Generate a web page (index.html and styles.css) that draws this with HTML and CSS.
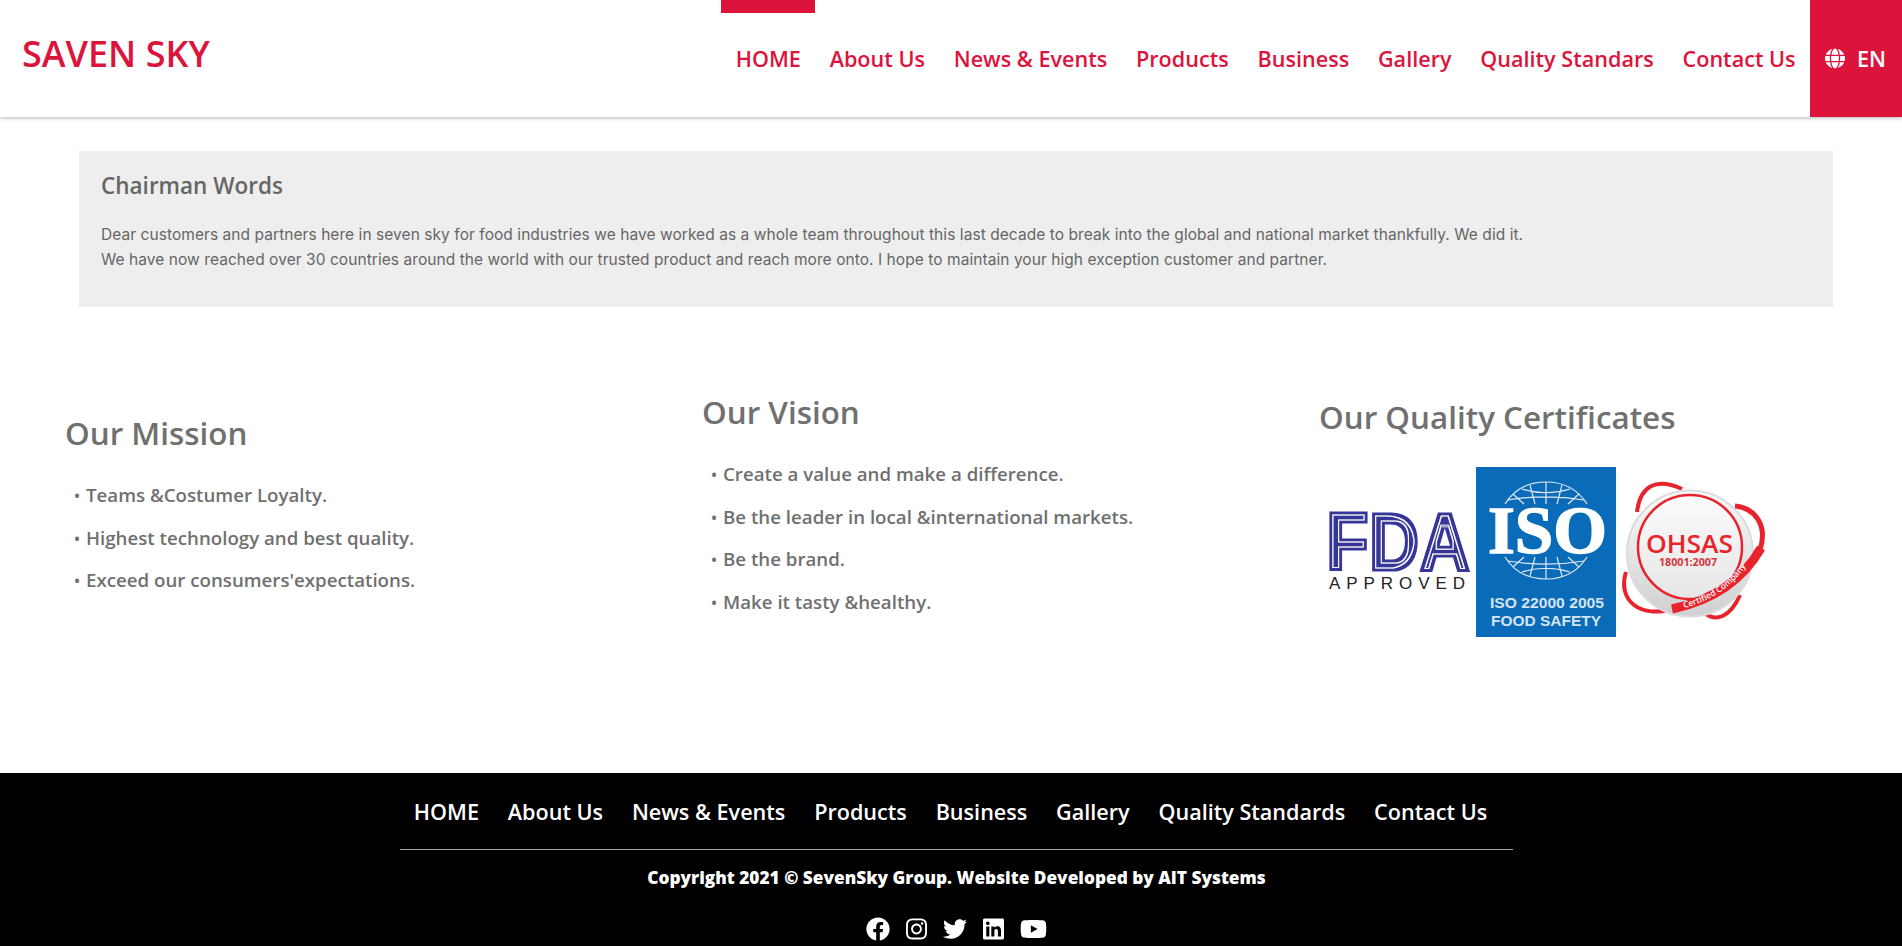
FILE: index.html
```html
<!DOCTYPE html>
<html lang="en">
<head>
    <meta charset="UTF-8">
    <meta name="viewport" content="width=device-width, initial-scale=1.0">
    <title>Chairman Words - Seven Sky</title>
    <link rel="stylesheet" href="styles.css">
</head>
<body>

    <header class="topbar">
        <a class="logo" href="#">SAVEN SKY</a>
        <nav class="main-nav">
            <a class="active" href="#">HOME</a>
            <a href="#">About Us</a>
            <a href="#">News &amp; Events</a>
            <a href="#">Products</a>
            <a href="#">Business</a>
            <a href="#">Gallery</a>
            <a href="#">Quality Standars</a>
            <a href="#">Contact Us</a>
        </nav>
        <a class="lang" href="#">
            <svg class="lang-icon" viewBox="0 0 496 512"><path fill="currentColor" d="M336.5 160C322 70.7 287.8 8 248 8s-74 62.7-88.5 152h177zM152 256c0 22.2 1.2 43.5 3.3 64h185.3c2.1-20.5 3.3-41.8 3.3-64s-1.2-43.5-3.3-64H155.3c-2.1 20.5-3.3 41.8-3.3 64zm324.7-96c-28.6-67.9-86.5-120.4-158-141.6 24.4 33.8 41.2 84.7 50 141.6h108zM177.2 18.4C105.8 39.6 47.8 92.1 19.3 160h108c8.7-56.9 25.5-107.8 49.9-141.6zM487.4 192H372.7c2.1 21 3.3 42.5 3.3 64s-1.2 43-3.3 64h114.6c5.5-20.5 8.6-41.8 8.6-64s-3.1-43.5-8.5-64zM120 256c0-21.5 1.2-43 3.3-64H8.6C3.2 212.5 0 233.8 0 256s3.2 43.5 8.6 64h114.6c-2-21-3.2-42.5-3.2-64zm39.5 96c14.5 89.3 48.7 152 88.5 152s74-62.7 88.5-152h-177zm159.3 141.6c71.4-21.2 129.4-73.7 158-141.6h-108c-8.8 56.9-25.6 107.8-50 141.6zM19.3 352c28.6 67.9 86.5 120.4 158 141.6-24.4-33.8-41.2-84.7-50-141.6h-108z"/></svg>
            EN
        </a>
    </header>

    <section class="chairman">
        <h3>Chairman Words</h3>
        <p>Dear customers and partners here in seven sky for food industries we have worked as a whole team throughout this last decade to break into the global and national market thankfully. We did it.</p>
        <p>We have now reached over 30 countries around the world with our trusted product and reach more onto. I hope to maintain your high exception customer and partner.</p>
    </section>

    <section class="columns">
        <div class="col">
            <h2>Our Mission</h2>
            <ul>
                <li>Teams &amp;Costumer Loyalty.</li>
                <li>Highest technology and best quality.</li>
                <li>Exceed our consumers'expectations.</li>
            </ul>
        </div>
        <div class="col">
            <h2>Our Vision</h2>
            <ul>
                <li>Create a value and make a difference.</li>
                <li>Be the leader in local &amp;international markets.</li>
                <li>Be the brand.</li>
                <li>Make it tasty &amp;healthy.</li>
            </ul>
        </div>
        <div class="col col-certs">
            <h2>Our Quality Certificates</h2>
            <!-- drawn in crop coordinates, 480x200 -->
            <svg class="certs" viewBox="0 0 480 200">
                <defs>
                    <!-- white inline inside the FDA letters -->
                    <filter id="inline" x="0" y="0" width="100%" height="100%">
                        <feMorphology in="SourceAlpha" operator="erode" radius="3" result="outer"/>
                        <feMorphology in="SourceAlpha" operator="erode" radius="3.5" result="inner"/>
                        <feComposite in="outer" in2="inner" operator="out" result="ring"/>
                        <feFlood flood-color="#fff"/>
                        <feComposite in2="ring" operator="in" result="line"/>
                        <feMerge>
                            <feMergeNode in="SourceGraphic"/>
                            <feMergeNode in="line"/>
                        </feMerge>
                    </filter>
                    <linearGradient id="disc" x1="0" y1="0" x2="0" y2="1">
                        <stop offset="0" stop-color="#fafafa"/>
                        <stop offset="1" stop-color="#d0d0d2"/>
                    </linearGradient>
                    <path id="band-line" d="M384 158 C408 152 433 138 449 111"/>
                </defs>

                <!-- FDA -->
                <text x="26" y="120" font-family="'Liberation Sans', Arial, sans-serif" font-weight="700" font-size="81" textLength="144" lengthAdjust="spacingAndGlyphs" fill="#36349a" stroke="#36349a" stroke-width="3" filter="url(#inline)">FDA</text>
                <text x="29" y="139" font-family="'Liberation Sans', Arial, sans-serif" font-size="17" textLength="136" fill="#222">APPROVED</text>

                <!-- ISO -->
                <rect x="176" y="17" width="140" height="170" fill="#0a6bb8"/>
                <g fill="none" stroke="#dfeaf5" stroke-width="1.2">
                    <path d="M205 54 C215 38 230 32 246 32 C262 32 277 38 287 54"/>
                    <path d="M213 44 L224 54 M230 35 L235 54 M246 32 V54 M262 35 L257 54 M279 44 L268 54 M222 39 C238 44 254 44 270 39 M208 50 C232 46 260 46 284 50"/>
                    <path d="M205 107 C215 123 230 129 246 129 C262 129 277 123 287 107"/>
                    <path d="M213 117 L224 107 M230 126 L235 107 M246 129 V107 M262 126 L257 107 M279 117 L268 107 M222 122 C238 117 254 117 270 122 M208 111 C232 115 260 115 284 111"/>
                </g>
                <text x="188" y="103" font-family="'Liberation Serif', serif" font-weight="700" font-size="68" textLength="119" lengthAdjust="spacingAndGlyphs" fill="#fff" stroke="#fff" stroke-width="1.5">ISO</text>
                <g font-family="'Liberation Sans', Arial, sans-serif" font-weight="700" font-size="15" fill="#d5e4f2">
                    <text x="190" y="158" textLength="114" lengthAdjust="spacingAndGlyphs">ISO 22000 2005</text>
                    <text x="191" y="176" textLength="110" lengthAdjust="spacingAndGlyphs">FOOD SAFETY</text>
                </g>

                <!-- OHSAS -->
                <g fill="none" stroke="#e8232c">
                    <path d="M337 62 C340 36 356 27 382 39" stroke-width="4"/>
                    <path d="M435 56 C455 58 468 75 460 100" stroke-width="5"/>
                    <path d="M326 122 C317 150 340 170 375 158" stroke-width="4"/>
                    <path d="M405 163 C415 172 430 168 440 145" stroke-width="4"/>
                </g>
                <circle cx="390" cy="103.5" r="63" fill="url(#disc)" stroke="#dcdcde" stroke-width="2"/>
                <circle cx="390" cy="97" r="52" fill="#fff" fill-opacity=".4" stroke="#e8232c" stroke-width="2.5"/>
                <text x="346" y="103" font-family="'Open Sans', sans-serif" font-weight="600" font-size="25" textLength="87" lengthAdjust="spacingAndGlyphs" fill="#e8232c">OHSAS</text>
                <text x="359" y="116" font-family="'Open Sans', sans-serif" font-weight="700" font-size="10.5" textLength="58" lengthAdjust="spacingAndGlyphs" fill="#d8333a">18001:2007</text>
                <path d="M372 159 C405 152 440 135 461 98" fill="none" stroke="#e8232c" stroke-width="9"/>
                <text font-family="'Open Sans', sans-serif" font-weight="600" font-size="8.5" fill="#fff"><textPath href="#band-line">Certified Company</textPath></text>
            </svg>
        </div>
    </section>

    <footer class="footer">
        <nav class="footer-nav">
            <a href="#">HOME</a>
            <a href="#">About Us</a>
            <a href="#">News &amp; Events</a>
            <a href="#">Products</a>
            <a href="#">Business</a>
            <a href="#">Gallery</a>
            <a href="#">Quality Standards</a>
            <a href="#">Contact Us</a>
        </nav>
        <p class="copyright">Copyright 2021 © SevenSky Group. Website Developed by AIT Systems</p>
        <div class="social">
            <a href="#"><svg viewBox="0 0 512 512"><path fill="currentColor" d="M504 256C504 119 393 8 256 8S8 119 8 256c0 123.78 90.69 226.38 209.25 245V327.69h-63V256h63v-54.64c0-62.15 37-96.48 93.67-96.48 27.14 0 55.52 4.84 55.52 4.84v61h-31.28c-30.8 0-40.41 19.12-40.41 38.73V256h68.78l-11 71.69h-57.78V501C413.31 482.38 504 379.78 504 256z"/></svg></a>
            <a href="#"><svg viewBox="0 0 448 512"><path fill="currentColor" d="M224.1 141c-63.6 0-114.9 51.3-114.9 114.9s51.3 114.9 114.9 114.9S339 319.5 339 255.9 287.7 141 224.1 141zm0 189.6c-41.1 0-74.7-33.5-74.7-74.7s33.5-74.7 74.7-74.7 74.7 33.5 74.7 74.7-33.6 74.7-74.7 74.7zm146.4-194.3c0 14.9-12 26.8-26.8 26.8-14.9 0-26.8-12-26.8-26.8s12-26.8 26.8-26.8 26.8 12 26.8 26.8zm76.1 27.2c-1.7-35.9-9.9-67.7-36.2-93.9-26.2-26.2-58-34.4-93.9-36.2-37-2.1-147.9-2.1-184.9 0-35.8 1.7-67.6 9.9-93.9 36.1s-34.4 58-36.2 93.9c-2.1 37-2.1 147.9 0 184.9 1.7 35.9 9.9 67.7 36.2 93.9s58 34.4 93.9 36.2c37 2.1 147.9 2.1 184.9 0 35.9-1.7 67.7-9.9 93.9-36.2 26.2-26.2 34.4-58 36.2-93.9 2.1-37 2.1-147.8 0-184.8zM398.8 388c-7.8 19.6-22.9 34.7-42.6 42.6-29.5 11.7-99.5 9-132.1 9s-102.7 2.6-132.1-9c-19.6-7.8-34.7-22.9-42.6-42.6-11.7-29.5-9-99.5-9-132.1s-2.6-102.7 9-132.1c7.8-19.6 22.9-34.7 42.6-42.6 29.5-11.7 99.5-9 132.1-9s102.7-2.6 132.1 9c19.6 7.8 34.7 22.9 42.6 42.6 11.7 29.5 9 99.5 9 132.1s2.7 102.7-9 132.1z"/></svg></a>
            <a href="#"><svg viewBox="0 0 512 512"><path fill="currentColor" d="M459.37 151.716c.325 4.548.325 9.097.325 13.645 0 138.72-105.583 298.558-298.558 298.558-59.452 0-114.68-17.219-161.137-47.106 8.447.974 16.568 1.299 25.34 1.299 49.055 0 94.213-16.568 130.274-44.832-46.132-.975-84.792-31.188-98.112-72.772 6.498.974 12.995 1.624 19.818 1.624 9.421 0 18.843-1.3 27.614-3.573-48.081-9.747-84.143-51.98-84.143-102.985v-1.299c13.969 7.797 30.214 12.67 47.431 13.319-28.264-18.843-46.781-51.005-46.781-87.391 0-19.492 5.197-37.36 14.294-52.954 51.655 63.675 129.3 105.258 216.365 109.807-1.624-7.797-2.599-15.918-2.599-24.04 0-57.828 46.782-104.934 104.934-104.934 30.213 0 57.502 12.67 76.67 33.137 23.715-4.548 46.456-13.32 66.599-25.34-7.798 24.366-24.366 44.833-46.132 57.827 21.117-2.273 41.584-8.122 60.426-16.243-14.292 20.791-32.161 39.308-52.628 54.253z"/></svg></a>
            <a href="#"><svg viewBox="0 0 448 512"><path fill="currentColor" d="M416 32H31.9C14.3 32 0 46.5 0 64.3v383.4C0 465.5 14.3 480 31.9 480H416c17.6 0 32-14.5 32-32.3V64.3c0-17.8-14.4-32.3-32-32.3zM135.4 416H69V202.2h66.5V416zm-33.2-243c-21.3 0-38.5-17.3-38.5-38.5S80.9 96 102.2 96c21.2 0 38.5 17.3 38.5 38.5 0 21.3-17.2 38.5-38.5 38.5zm282.1 243h-66.4V312c0-24.8-.5-56.7-34.5-56.7-34.6 0-39.9 27-39.9 54.9V416h-66.4V202.2h63.7v29.2h.9c8.9-16.8 30.6-34.5 62.9-34.5 67.2 0 79.7 44.3 79.7 101.9V416z"/></svg></a>
            <a href="#"><svg viewBox="0 0 576 512"><path fill="currentColor" d="M549.655 124.083c-6.281-23.65-24.787-42.276-48.284-48.597C458.781 64 288 64 288 64S117.22 64 74.629 75.486c-23.497 6.322-42.003 24.947-48.284 48.597-11.412 42.867-11.412 132.305-11.412 132.305s0 89.438 11.412 132.305c6.281 23.65 24.787 41.5 48.284 47.821C117.22 448 288 448 288 448s170.78 0 213.371-11.486c23.497-6.321 42.003-24.171 48.284-47.821 11.412-42.867 11.412-132.305 11.412-132.305s0-89.438-11.412-132.305zm-317.51 213.508V175.185l142.739 81.205-142.739 81.201z"/></svg></a>
        </div>
    </footer>

</body>
</html>
```

FILE: styles.css
```css
* {
    box-sizing: border-box;
}
body {
    margin: 0;
    background-color: #fff;
    font-family: "Open Sans", sans-serif;
    color: #707070;
}
a {
    color: inherit;
    text-decoration: none;
}

/* header */
.topbar {
    display: flex;
    height: 117px;
    background-color: #fff;
    box-shadow: 0 1px 4px rgba(0,0,0,0.3);
    position: relative;
}
.logo {
    margin: 31px auto 0 22px;
    font-size: 36px;
    line-height: 46px;
    font-weight: 600;
    color: #dc143c;
}
.main-nav {
    display: flex;
    align-items: flex-start;
}
.main-nav a {
    position: relative;
    padding: 44px 14.4px 0;
    font-size: 21.6px;
    line-height: 29px;
    font-weight: 600;
    color: #dc143c;
    white-space: nowrap;
}
.main-nav a.active::before {
    content: "";
    position: absolute;
    top: 0;
    left: 0;
    right: 0;
    height: 13px;
    background-color: #dc143c;
}
.lang {
    display: flex;
    align-items: flex-start;
    gap: 12px;
    width: 92px;
    padding: 44px 0 0 15px;
    background-color: #dc143c;
    color: #fff;
    font-size: 21.6px;
    line-height: 29px;
    font-weight: 600;
}
.lang-icon {
    width: 20px;
    height: 29px;
}

/* chairman box */
.chairman {
    margin: 34px 69px 0 79px;
    height: 156px;
    padding: 20px 22px;
    background-color: #eee;
}
.chairman h3 {
    margin: 0 0 21px;
    font-size: 22.5px;
    line-height: 30px;
    font-weight: 600;
    color: #666;
}
.chairman p {
    margin: 0;
    font-family: Inter, "Liberation Sans", sans-serif;
    font-size: 15.5px;
    line-height: 25px;
    letter-spacing: 0.06px;
    color: #666;
}

/* three columns */
.columns {
    display: grid;
    grid-template-columns: 637px 617px 1fr;
    align-items: center;
    padding: 86px 0 114px 65px;
}
.col h2 {
    margin: 0 0 22px;
    font-size: 31.4px;
    line-height: 38px;
    font-weight: 600;
    color: #707070;
}
.col ul {
    margin: 0 0 36px;
    padding: 0;
    list-style: none;
}
.col li {
    padding-left: 21px;
    height: 42.5px;
    font-size: 18.7px;
    line-height: 42.5px;
    font-weight: 600;
}
.col li::before {
    content: "•";
    display: inline-block;
    width: 12px;
    margin-left: -12px;
    font-size: 16px;
    line-height: 1;
}
.col-certs h2 {
    margin-bottom: 14px;
}
.certs {
    display: block;
    width: 480px;
    height: 200px;
    margin: 0 0 4px -19px;
}

/* footer */
.footer {
    height: 173px;
    padding: 19px 0 0 11px;
    background-color: #000;
    color: #fff;
    text-align: center;
}
.footer-nav {
    display: flex;
    justify-content: center;
    width: 1113px;
    margin: 0 auto;
    padding: 1px 12px 18px 0;
    border-bottom: 1px solid #aaa;
}
.footer-nav a {
    padding: 0 14.4px;
    font-size: 21.6px;
    line-height: 38px;
    font-weight: 600;
    white-space: nowrap;
}
.copyright {
    margin: 16px 0 0;
    font-size: 17.25px;
    line-height: 24px;
    font-weight: 800;
}
.social {
    display: flex;
    justify-content: center;
    gap: 16px;
    margin-top: 27px;
}
.social a {
    display: block;
    height: 24px;
}
.social svg {
    display: block;
    height: 24px;
}
```
